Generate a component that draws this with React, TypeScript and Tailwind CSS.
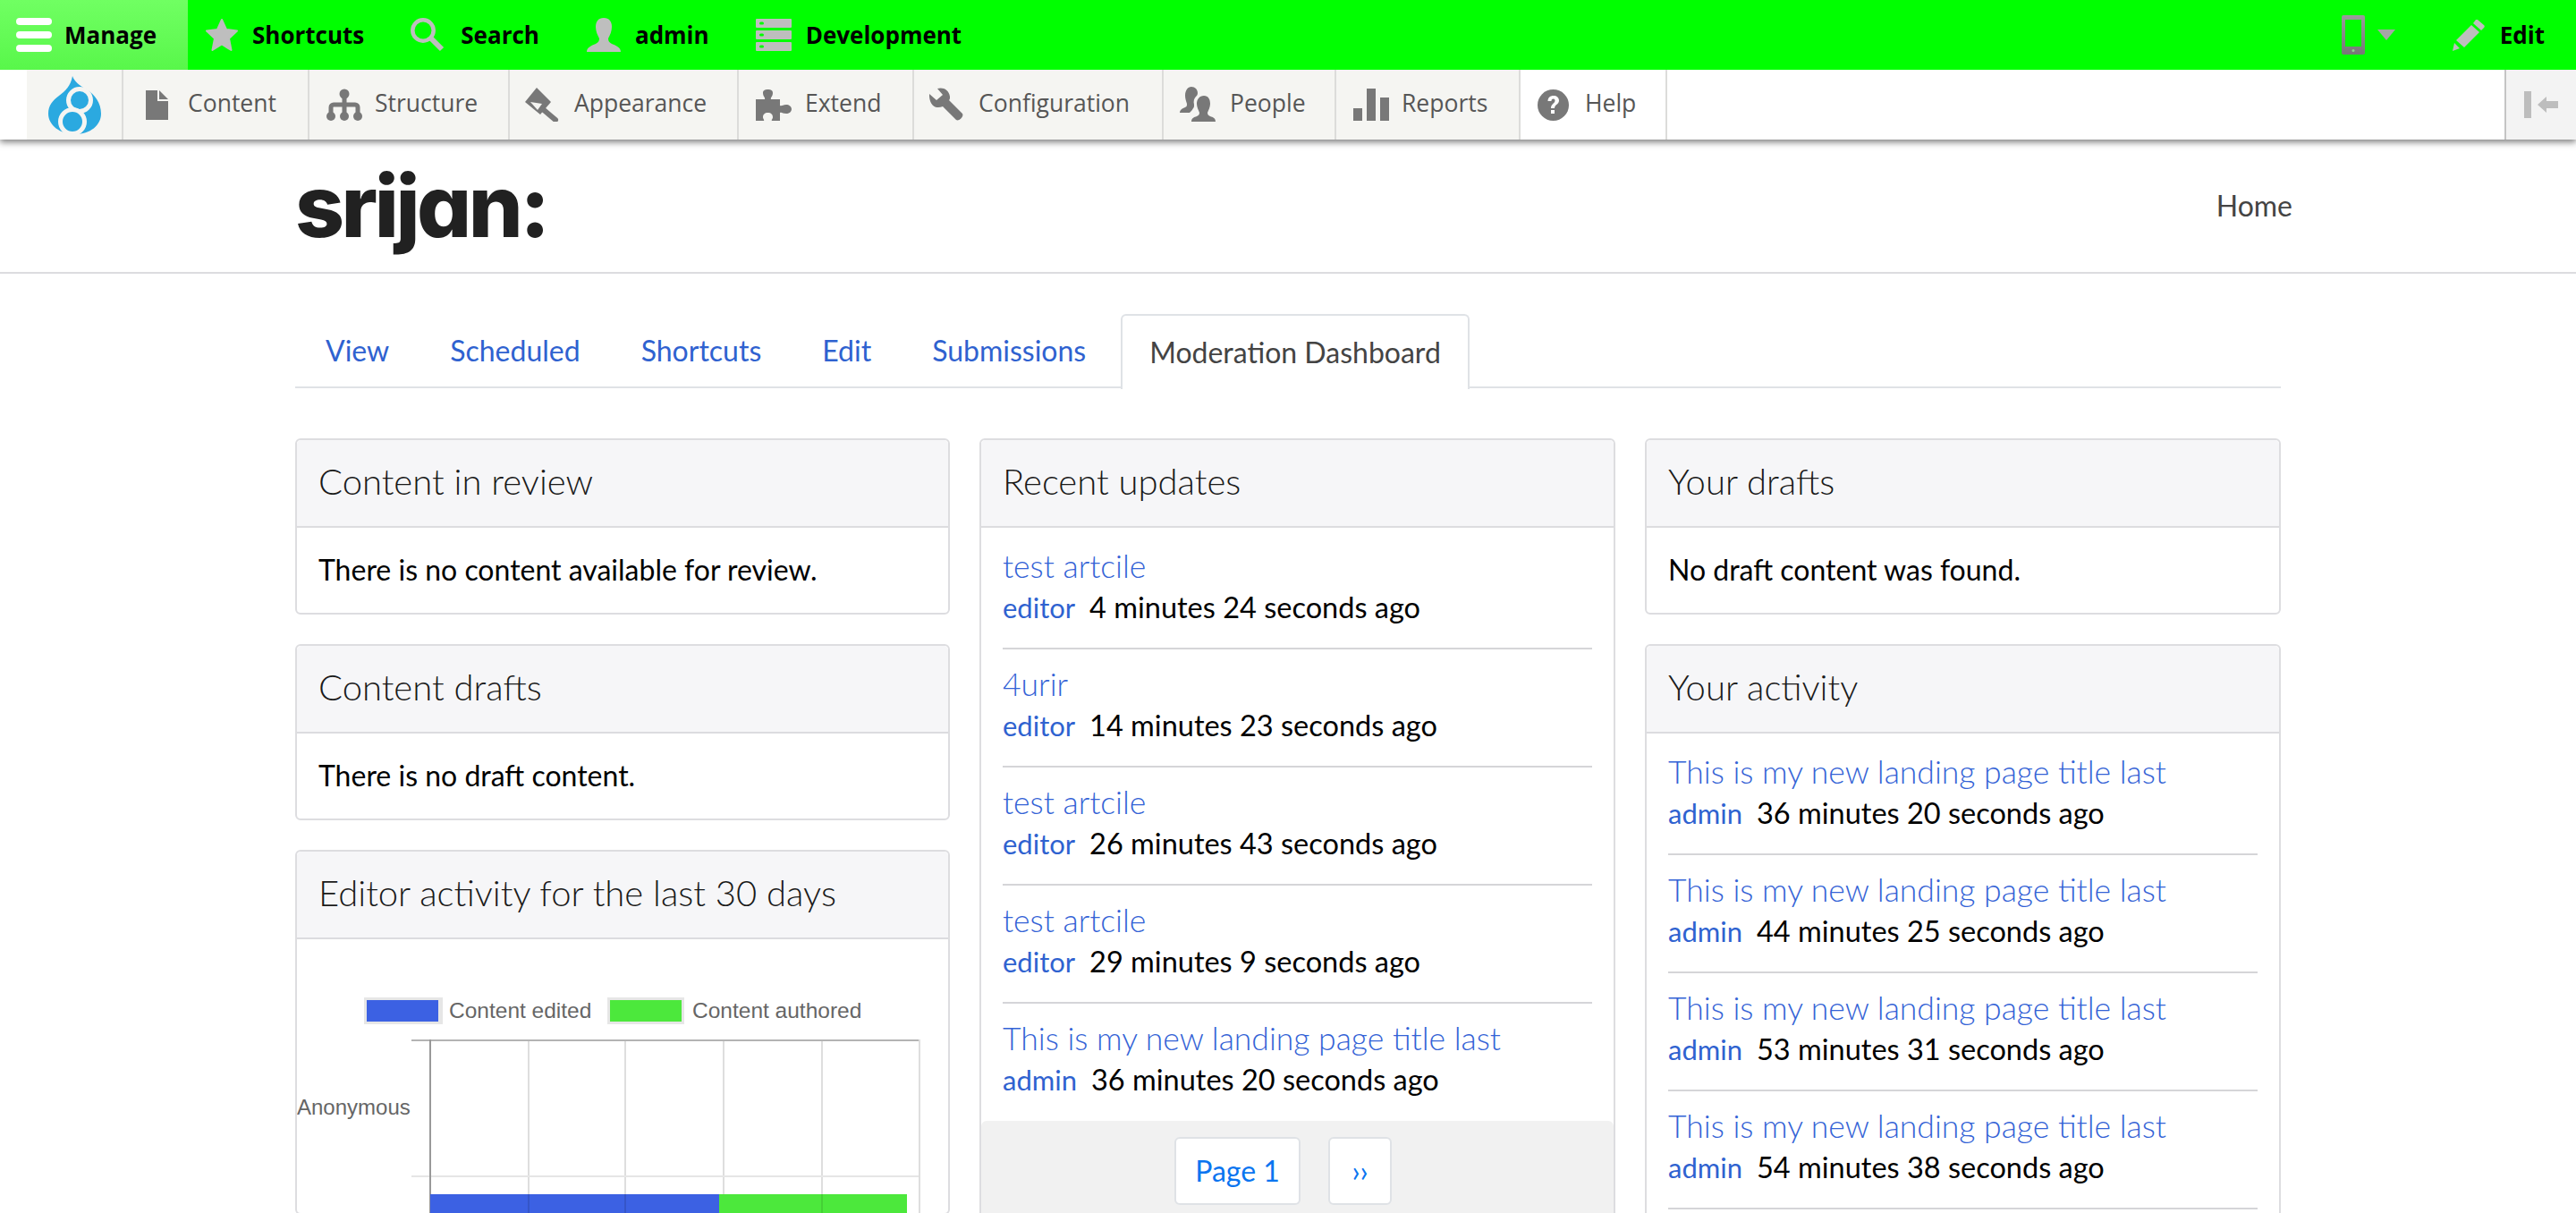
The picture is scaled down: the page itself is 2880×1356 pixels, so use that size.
import React from 'react';

const bodyFont = { fontFamily: 'Lato, sans-serif' };

const Hamburger = () => (
  <svg width="40" height="38" viewBox="0 0 40 38" fill="#fff">
    <rect y="0" width="40" height="8" rx="4" />
    <rect y="15" width="40" height="8" rx="4" />
    <rect y="30" width="40" height="8" rx="4" />
  </svg>
);
const Star = () => (
  <svg width="38" height="38" viewBox="0 0 38 38" fill="#bebebe" stroke="#bebebe" strokeWidth="2" strokeLinejoin="round">
    <path d="M19 2l5 11 12 1.500-9 8.500 2.500 13-10.500-6.500-10.500 6.500 2.500-13-9-8.500 12-1.500z" />
  </svg>
);
const SearchIcon = () => (
  <svg width="38" height="38" viewBox="0 0 38 38" fill="none" stroke="#bebebe">
    <circle cx="14" cy="14" r="11.700" strokeWidth="4.500" />
    <path d="M23 23l12 12" strokeWidth="6" />
  </svg>
);
const UserIcon = () => (
  <svg width="38" height="38" viewBox="0 0 38 38" fill="#bebebe">
    <path d="M19 0c6 0 9 4 9 10 0 5-2 9-4 13 0 3 1 4 4 6 5 2 10 4 10 9H0c0-5 5-7 10-9 3-2 4-3 4-6-2-4-4-8-4-13 0-6 3-10 9-10z" />
  </svg>
);
const DevIcon = () => (
  <svg width="40" height="36" viewBox="0 0 40 36">
    <rect width="40" height="10" y="0" rx="1" fill="#bebebe" />
    <rect width="40" height="10" y="13" rx="1" fill="#bebebe" />
    <rect width="40" height="10" y="26" rx="1" fill="#bebebe" />
    <rect x="4" y="3.500" width="5" height="3" rx="1.500" fill="#00ff00" />
    <rect x="4" y="16.500" width="5" height="3" rx="1.500" fill="#00ff00" />
    <rect x="4" y="29.500" width="5" height="3" rx="1.500" fill="#00ff00" />
  </svg>
);
const PhoneIcon = () => (
  <svg width="26" height="44" viewBox="0 0 26 44">
    <defs>
      <linearGradient id="phone" x1="0" y1="0" x2="0" y2="1">
        <stop offset="0" stopColor="#9a9a9a" />
        <stop offset="1" stopColor="#777" />
      </linearGradient>
    </defs>
    <rect width="26" height="44" rx="2" fill="url(#phone)" />
    <rect x="4" y="5" width="18" height="30" fill="#00ff00" />
    <circle cx="13" cy="39.500" r="1.500" fill="#8fd08f" />
  </svg>
);
const Caret = () => (
  <svg width="20" height="12" viewBox="0 0 20 12" fill="#a6a6a6" className="block">
    <path d="M0 0h20L10 12z" />
  </svg>
);
const PencilIcon = () => (
  <svg width="36" height="35" viewBox="0 0 36 35" fill="#bebebe">
    <path d="M28 0l7 6c1 1 1 2 0 3l-3 3-9-8 3-4c1-1 1-1 2 0zM21 6l9 8-17 17-9-8zM2 26l6 6-8 3z" />
  </svg>
);
const FileIcon = () => (
  <svg width="25" height="33" viewBox="0 0 25 33" fill="#787878">
    <path d="M0 0h13v12h12v21H0z" />
    <path d="M15 0l10 10H15z" />
  </svg>
);
const TreeIcon = () => (
  <svg width="40" height="36" viewBox="0 0 40 36">
    <path d="M5 31V21a3 3 0 0 1 3-3H32a3 3 0 0 1 3 3V31M20 6V31" fill="none" stroke="#787878" strokeWidth="5" />
    <circle cx="20" cy="6" r="5.500" fill="#787878" />
    <circle cx="5" cy="31" r="5" fill="#787878" />
    <circle cx="20" cy="31" r="5" fill="#787878" />
    <circle cx="35" cy="31" r="5" fill="#787878" />
  </svg>
);
const BrushIcon = () => (
  <svg width="38" height="38" viewBox="0 0 38 38">
    <path d="M13 0L0 16l17 14 12-14z" fill="#787878" />
    <path d="M6 16l13 2-5 7z" fill="#f5f5f2" />
    <path d="M21 25l13 11" stroke="#787878" strokeWidth="6" strokeLinecap="round" />
  </svg>
);
const PuzzleIcon = () => (
  <svg width="40" height="35" viewBox="0 0 40 35" fill="#787878">
    <path d="M0 11H10c1-2-2-3-2-7C8 1 10 0 13.500 0S19 1 19 4c0 4-3 5-2 7H27V18c2 1 3-1 7-1 3 0 6 2 6 5s-3 5-6 5c-4 0-5-2-7-1V35H18c-1-1 1-2 1-4 0-3-2-5-5.500-5S8 28 8 31c0 2 2 3 1 4H0z" />
  </svg>
);
const WrenchIcon = () => (
  <svg width="38" height="38" viewBox="0 0 38 38" fill="#787878">
    <path d="M9 1C15-1 22 2 23 10c0 2 0 3-1 4l15 15c2 3-4 9-7 7L15 21C8 24 1 21 0 10V7l8 7 7-6z" />
  </svg>
);
const PeopleIcon = () => (
  <svg width="41" height="40" viewBox="0 0 41 40" fill="#787878">
    <path d="M13 0c4 0 7 3 7 7 0 2-1 3-2 4-2 2-3 5-2 9 0 2 0 3-1 4-1 2-3 4-4 5H0c0-3 3-5 6-6 2-1 2-2 2-4-1-3-2-6-2-9C6 4 9 0 13 0z" />
    <path d="M27 10c5 0 7 4 7 9 0 4-2 7-3 10 0 2 1 3 3 4 3 1 6 2 6 6H13c0-4 3-5 6-6 2-1 3-2 3-4-1-3-3-6-3-10 0-5 3-9 8-9z" />
  </svg>
);
const BarsIcon = () => (
  <svg width="40" height="36" viewBox="0 0 40 36" fill="#787878">
    <rect y="22" width="10" height="14" />
    <rect x="15" width="10" height="36" />
    <rect x="30" y="10" width="10" height="26" />
  </svg>
);
const HelpIcon = () => (
  <svg width="35" height="35" viewBox="0 0 35 35">
    <circle cx="17.500" cy="17.500" r="17.500" fill="#787878" />
    <path d="M11.500 13c0-4 3-6 6-6 4 0 6.500 2 6.500 5.500 0 4-5 4.500-5 8.500h-4c0-5 4.500-5.500 4.500-8.500 0-1.500-1-2-2-2-1.500 0-2 1-2 2.500z" fill="#fff" />
    <rect x="15" y="23" width="4" height="4" fill="#fff" />
  </svg>
);
const CollapseIcon = () => (
  <svg width="38" height="30" viewBox="0 0 38 30" fill="#bdbdbd">
    <rect width="8" height="30" />
    <path d="M15 15l10-9v5h13v8H25v5z" />
  </svg>
);
const DrupalLogo = () => (
  <svg width="59" height="65" viewBox="0 0 59 65">
    <path d="M27 0c2 6 8 11 16 15 9 6 16 15 16 27 0 13-12 23-29 23S0 55 0 42c0-9 5-15 12-20 7-5 13-11 15-22z" fill="#2ba9e0" />
    <circle cx="35" cy="27" r="12.500" fill="#2ba9e0" stroke="#f5f5f2" strokeWidth="5" />
    <circle cx="27" cy="51" r="13.500" fill="#2ba9e0" stroke="#f5f5f2" strokeWidth="5" />
  </svg>
);

const topLeft = [
  { label: 'Shortcuts', icon: <Star />, pad: 'pl-[19px] pr-[52px] gap-[15px]' },
  { label: 'Search', icon: <SearchIcon />, pad: 'pr-[53px] gap-[18px]' },
  { label: 'admin', icon: <UserIcon />, pad: 'pr-[52px] gap-[16px]' },
  { label: 'Development', icon: <DevIcon />, pad: 'gap-[16px]' },
];

const adminMenu = [
  { label: 'Content', icon: <FileIcon />, w: 'w-[208px]', pl: 'pl-[25px]', gap: 'gap-[22px]' },
  { label: 'Structure', icon: <TreeIcon />, w: 'w-[224px]', pl: 'pl-[19px]', gap: 'gap-[14px]' },
  { label: 'Appearance', icon: <BrushIcon />, w: 'w-[256px]', pl: 'pl-[17px]', gap: 'gap-[17px]' },
  { label: 'Extend', icon: <PuzzleIcon />, w: 'w-[196px]', pl: 'pl-[19px]', gap: 'gap-[15px]' },
  { label: 'Configuration', icon: <WrenchIcon />, w: 'w-[279px]', pl: 'pl-[17px]', gap: 'gap-[17px]' },
  { label: 'People', icon: <PeopleIcon />, w: 'w-[193px]', pl: 'pl-[18px]', gap: 'gap-[15px]' },
  { label: 'Reports', icon: <BarsIcon />, w: 'w-[206px]', pl: 'pl-[19px]', gap: 'gap-[14px]' },
];

const tabs = ['View', 'Scheduled', 'Shortcuts', 'Edit', 'Submissions'];

const recent = [
  { title: 'test artcile', user: 'editor', ago: '4 minutes 24 seconds ago' },
  { title: '4urir', user: 'editor', ago: '14 minutes 23 seconds ago' },
  { title: 'test artcile', user: 'editor', ago: '26 minutes 43 seconds ago' },
  { title: 'test artcile', user: 'editor', ago: '29 minutes 9 seconds ago' },
  { title: 'This is my new landing page title last', user: 'admin', ago: '36 minutes 20 seconds ago' },
];

const activity = [
  { title: 'This is my new landing page title last', user: 'admin', ago: '36 minutes 20 seconds ago' },
  { title: 'This is my new landing page title last', user: 'admin', ago: '44 minutes 25 seconds ago' },
  { title: 'This is my new landing page title last', user: 'admin', ago: '53 minutes 31 seconds ago' },
  { title: 'This is my new landing page title last', user: 'admin', ago: '54 minutes 38 seconds ago' },
];

const Card = ({ title, children }: { title: string; children: React.ReactNode }) => (
  <div className="border-2 border-[#dddde0] rounded-[6px] bg-white">
    <div className="h-[98px] pb-[4px] bg-[#f6f6f8] border-b-2 border-[#dcdcdf] rounded-t-[5px] flex items-center px-[24px] text-[40px] font-light text-[#1a1a1a]">
      {title}
    </div>
    {children}
  </div>
);

const Message = ({ text }: { text: string }) => (
  <div className="h-[95px] px-[24px] pb-[2px] flex items-center text-[32px] text-black">{text}</div>
);

const Rows = ({ rows, lastLine }: { rows: { title: string; user: string; ago: string }[]; lastLine?: boolean }) => (
  <div className={lastLine ? 'px-[24px] pt-[4px] pb-[40px]' : 'px-[24px] pt-[4px]'}>
    {rows.map((r, i) => (
      <div
        key={i}
        className={
          i < rows.length - 1 || lastLine
            ? 'h-[132px] pt-[16px] border-b-2 border-[#d5d5d8]'
            : 'h-[132px] pt-[16px]'
        }
      >
        <div className="text-[35.500px] leading-[46px] font-light text-[#3463d6] whitespace-nowrap">{r.title}</div>
        <div className="text-[32.500px] leading-[46px] whitespace-nowrap">
          <span className="text-[31px] text-[#2f62d0] mr-[16px]">{r.user}</span>
          <span className="text-black">{r.ago}</span>
        </div>
      </div>
    ))}
  </div>
);

const ActivityChart = () => (
  <svg width="728" height="306" viewBox="0 0 728 306" className="block">
    <rect x="75" y="65" width="88" height="30" fill="#e6e6e6" />
    <rect x="78" y="68" width="80" height="24" fill="#3c61e3" />
    <text x="170" y="88" fontSize="24.500" fill="#666" fontFamily="Liberation Sans, sans-serif">Content edited</text>
    <rect x="347" y="65" width="86" height="30" fill="#e6e6e6" />
    <rect x="350" y="68" width="80" height="24" fill="#4ce83c" />
    <text x="442" y="88" fontSize="24.500" fill="#666" fontFamily="Liberation Sans, sans-serif">Content authored</text>
    {[259, 367, 477, 587, 696].map(x => (
      <line key={x} x1={x} y1="112" x2={x} y2="306" stroke="#dedede" strokeWidth="2" />
    ))}
    <line x1="128" y1="113" x2="695" y2="113" stroke="#b4b4b4" strokeWidth="2" />
    <line x1="128" y1="265" x2="695" y2="265" stroke="#e6e6e6" strokeWidth="2" />
    <line x1="149" y1="112" x2="149" y2="306" stroke="#999" strokeWidth="2" />
    <text x="0" y="196" fontSize="24" fill="#666" fontFamily="Liberation Sans, sans-serif">Anonymous</text>
    <rect x="149" y="285" width="323" height="21" fill="#3c61e3" />
    <rect x="472" y="285" width="210" height="21" fill="#4ce83c" />
    {[259, 367].map(x => (
      <line key={x} x1={x} y1="285" x2={x} y2="306" stroke="#3555c8" strokeWidth="2" />
    ))}
    <line x1="587" y1="285" x2="587" y2="306" stroke="#44d036" strokeWidth="2" />
  </svg>
);

const App: React.FC = () => {
  return (
    <div className="w-[2880px] h-[1356px] overflow-hidden bg-white">
      {/* toolbar */}
      <div
        className="relative z-10 shadow-[0_3px_7px_rgba(0,0,0,0.5)]"
        style={{ fontFamily: '"Open Sans", sans-serif' }}
      >
        <div className="h-[78px] bg-[#00ff00] flex items-center justify-between text-[26px] font-bold text-black">
          <div className="flex items-center h-full">
            <div className="h-full w-[210px] flex items-center pl-[18px] gap-[14px] bg-gradient-to-b from-[#70ff62] to-[#58f74a]">
              <Hamburger />
              <span>Manage</span>
            </div>
            {topLeft.map(t => (
              <div key={t.label} className={`flex items-center ${t.pad}`}>
                {t.icon}
                <span>{t.label}</span>
              </div>
            ))}
          </div>
          <div className="flex items-center pr-[35px]">
            <PhoneIcon />
            <span className="ml-[14px] mr-[64px]"><Caret /></span>
            <PencilIcon />
            <span className="ml-[17px]">Edit</span>
          </div>
        </div>
        <div className="h-[78px] bg-white flex text-[26.500px] text-[#565656]">
          <div className="ml-[30px] w-[108px] bg-[#f5f5f2] border-r-2 border-[#dcdcda] flex items-center justify-center">
            <DrupalLogo />
          </div>
          {adminMenu.map(m => (
            <div
              key={m.label}
              className={`${m.w} ${m.pl} ${m.gap} shrink-0 bg-[#f5f5f2] border-r-2 border-[#dcdcda] flex items-center`}
            >
              {m.icon}
              <span className="mt-[-2px]">{m.label}</span>
            </div>
          ))}
          <div className="w-[164px] pl-[19px] gap-[18px] shrink-0 bg-white border-r-2 border-[#dcdcda] flex items-center">
            <HelpIcon />
            <span className="mt-[-2px]">Help</span>
          </div>
          <div className="ml-auto w-[80px] bg-[#f3f3f3] border-l-2 border-[#c4c4c4] flex items-center justify-center">
            <CollapseIcon />
          </div>
        </div>
      </div>

      <div style={bodyFont}>
        {/* site header */}
        <div className="h-[150px] border-b-2 border-[#dcdcdf]">
          <div className="w-[2220px] mx-auto h-full flex items-center justify-between">
            <span
              className="text-[96px] font-extrabold tracking-[-3.500px] text-[#212121] leading-none [font-feature-settings:'cv11']"
              style={{ fontFamily: 'Inter, sans-serif' }}
            >
              srijan:
            </span>
            <span className="text-[32px] text-[#444] mr-[-13px]">Home</span>
          </div>
        </div>

        <div className="w-[2220px] mx-auto">
          {/* tabs */}
          <div className="mt-[45px] h-[83px] border-b-2 border-[#dfe2e6] flex text-[32px]">
            {tabs.map(t => (
              <div key={t} className="px-[34px] flex items-center text-[#2f62d0]">{t}</div>
            ))}
            <div className="ml-[5px] px-[30px] h-[84px] bg-white border-2 border-b-0 border-[#dfe2e6] rounded-t-[6px] flex items-center text-[#444] whitespace-nowrap">
              Moderation Dashboard
            </div>
          </div>

          <div className="mt-[56px] grid grid-cols-[732px_711px_711px] gap-[33px] items-start">
            <div className="flex flex-col gap-[33px]">
              <Card title="Content in review">
                <Message text="There is no content available for review." />
              </Card>
              <Card title="Content drafts">
                <Message text="There is no draft content." />
              </Card>
              <Card title="Editor activity for the last 30 days">
                <ActivityChart />
              </Card>
            </div>
            <Card title="Recent updates">
              <Rows rows={recent} />
              <div className="h-[140px] mt-[-1px] bg-[#f1f1f1] rounded-[6px] flex justify-center gap-[31px] pt-[18px] pr-[32px]">
                <div className="w-[141px] h-[76px] bg-white border-2 border-[#dfe2e6] rounded-[6px] flex items-center justify-center text-[32px] text-[#0b75f0]">
                  Page 1
                </div>
                <div className="w-[71px] h-[76px] bg-white border-2 border-[#dfe2e6] rounded-[6px] flex items-center justify-center text-[32px] text-[#0b75f0]">
                  ››
                </div>
              </div>
            </Card>
            <div className="flex flex-col gap-[33px]">
              <Card title="Your drafts">
                <Message text="No draft content was found." />
              </Card>
              <Card title="Your activity">
                <Rows rows={activity} lastLine />
              </Card>
            </div>
          </div>
        </div>
      </div>
    </div>
  );
};

export default App;
